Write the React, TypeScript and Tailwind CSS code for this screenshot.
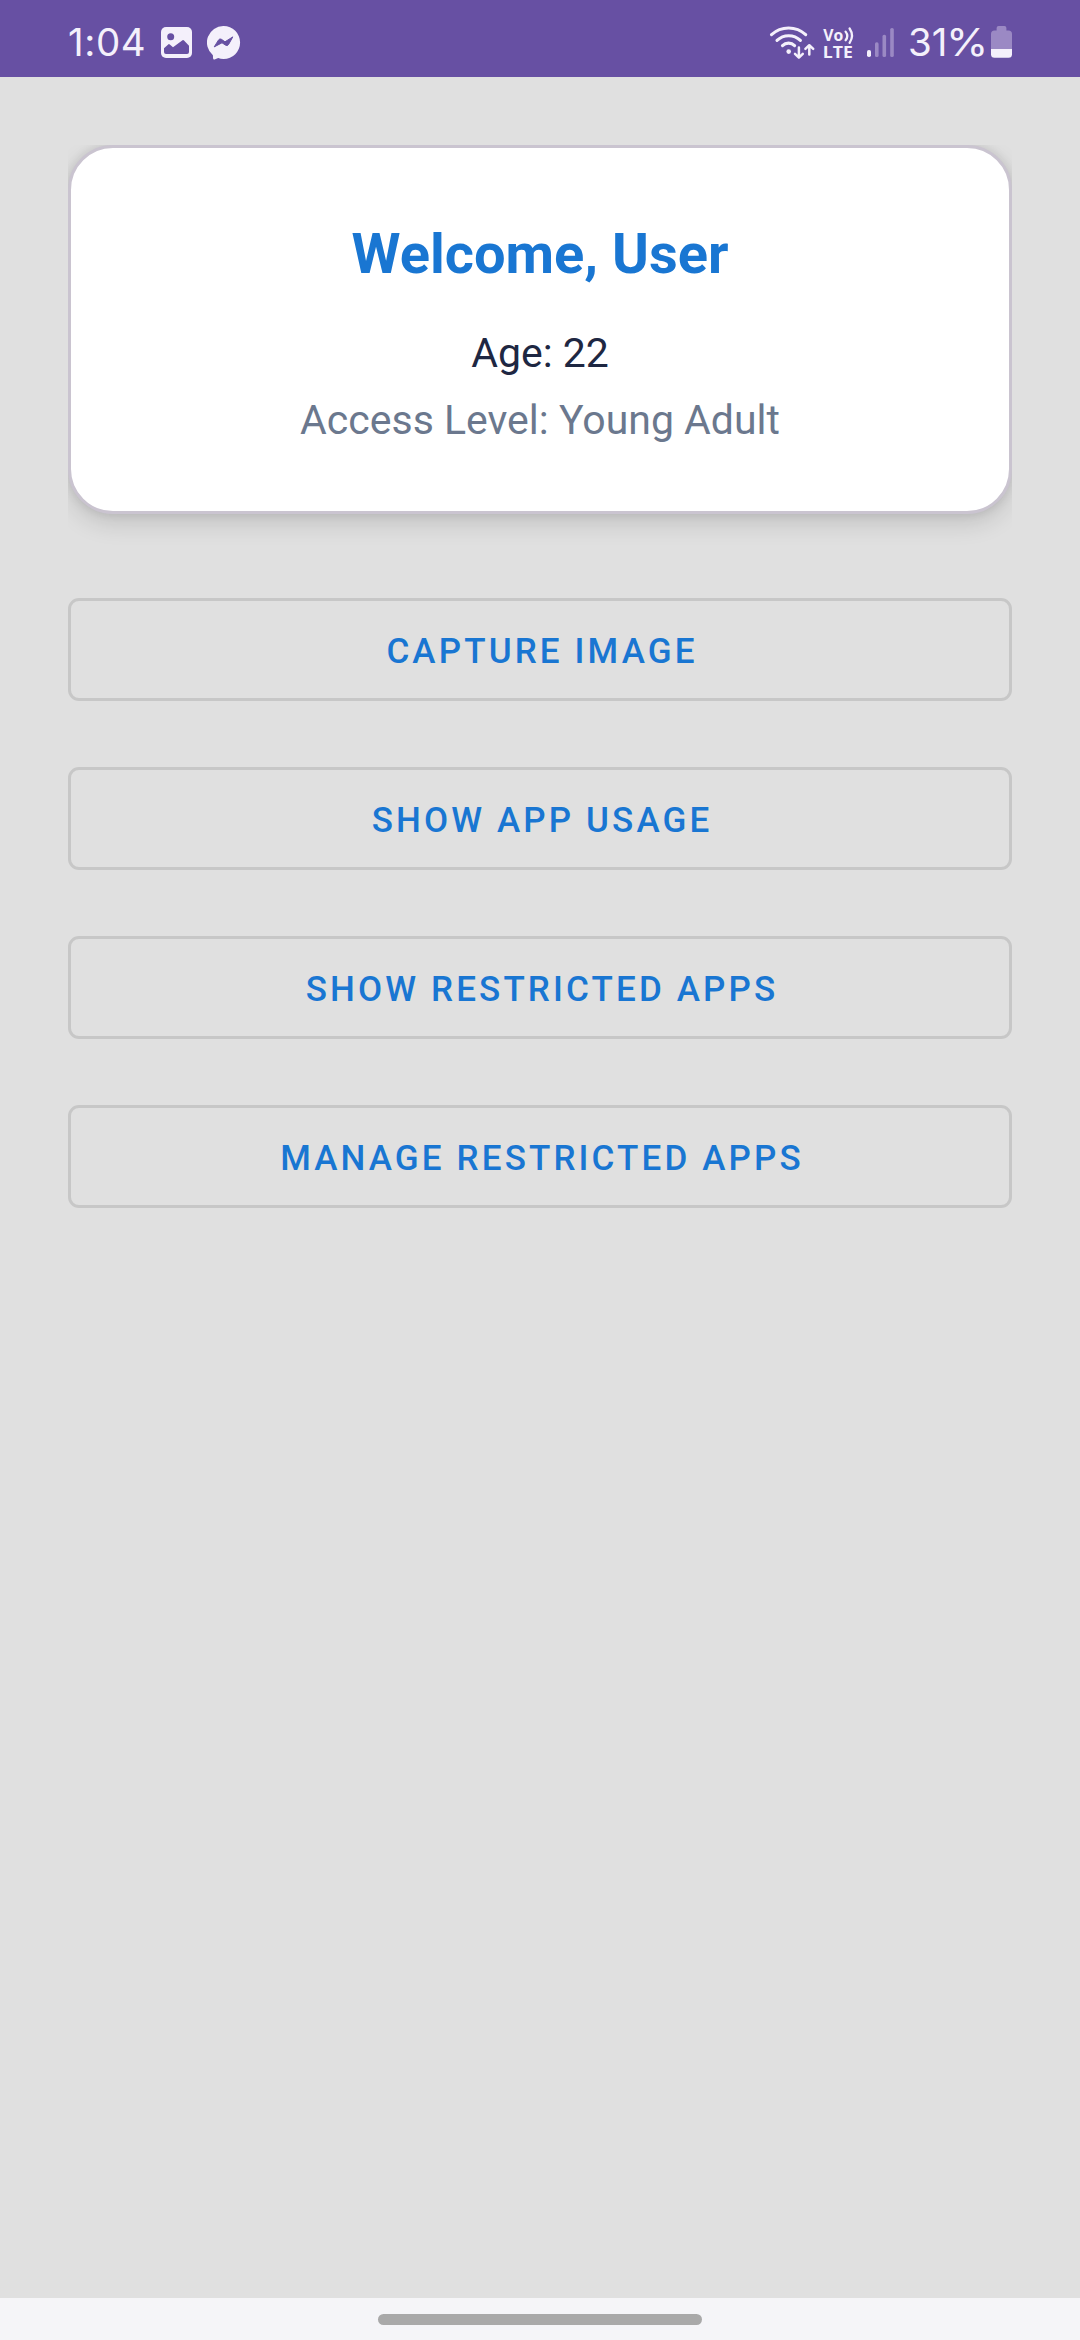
import type { ReactNode } from 'react';

function GalleryIcon() {
  return (
    <svg className="ml-4 h-[31px] w-[31px]" viewBox="0 0 31 31">
      <rect width="31" height="31" rx="5" fill="#f4f0fb" />
      <circle cx="9.7" cy="9.7" r="3.5" fill="#6750a3" />
      <path
        d="M3 21.3 7.2 17.4Q8 16.8 8.8 17.5L12 20.2 21.5 13.2Q22.3 12.6 23 13.4L28 18.7V25Q28 27 26 27H5Q3 27 3 25Z"
        fill="#6750a3"
      />
    </svg>
  );
}

function MessengerIcon() {
  return (
    <svg className="mt-0.5 ml-[15px] h-[34px] w-[34px]" viewBox="0 0 34 34">
      <path
        d="M16.6 0A16.5 16.5 0 0 1 16.6 33Q13.6 33 11.2 32L7.6 33.4Q6.2 33.8 6.1 32.4L5.9 29.2A16.5 16.5 0 0 1 16.6 0Z"
        fill="#f4f0fb"
      />
      <path
        d="M7.2 20.9 11.6 13.9Q12.8 12.3 14.4 13.3L18 15.8 25.8 10.9 21.6 18.4Q20.5 20.3 18.7 19.2L15 16.8Z"
        fill="#6750a3"
        stroke="#6750a3"
        strokeWidth="1"
        strokeLinejoin="round"
      />
    </svg>
  );
}

function WifiIcon() {
  return (
    <svg
      className="h-9 w-12"
      viewBox="0 0 48 36"
      fill="none"
      stroke="#f4f0fb"
      strokeLinecap="round"
      strokeLinejoin="round"
    >
      <g strokeWidth="3.1">
        <path d="M3.5 10.7A25.2 25.2 0 0 1 37.7 10.7" />
        <path d="M9 16.4A16.9 16.9 0 0 1 32.4 16.4" />
        <path d="M14.5 21.6A8.6 8.6 0 0 1 26.6 21.6" />
      </g>
      <circle cx="20.7" cy="27.6" r="2.3" fill="#f4f0fb" stroke="none" />
      <g strokeWidth="2.5">
        <path d="M30.9 23.6V33.4M27 29.9 30.9 33.6 34.8 29.9" />
        <path d="M41.3 30.6V21.2M37.4 24.9 41.3 21.2 45.2 24.9" />
      </g>
    </svg>
  );
}

function VolteIcon() {
  return (
    <svg className="mt-0.5 ml-1.5 h-[34px] w-8 overflow-visible" viewBox="0 0 32 34">
      <g fill="#f4f0fb" fontFamily="'Open Sans', sans-serif" fontWeight="700" fontSize="16.8">
        <text x="1.2" y="14.8" textLength="20" lengthAdjust="spacingAndGlyphs">
          Vo
        </text>
        <text x="0.8" y="32" textLength="30" lengthAdjust="spacingAndGlyphs">
          LTE
        </text>
      </g>
      <g fill="none" stroke="#f4f0fb" strokeWidth="2.3" strokeLinecap="round">
        <path d="M23.6 5.6Q27 10 23.6 14.2" />
        <path d="M27.6 2.5Q32.4 9.8 27.6 16.8" />
      </g>
    </svg>
  );
}

function SignalIcon() {
  return (
    <svg className="ml-[13px] h-[29px] w-[27px]" viewBox="0 0 27 29">
      <rect x="0" y="22" width="4" height="7" rx="1.8" fill="#f4f0fb" />
      <g fill="#9b89c4">
        <rect x="8" y="14.3" width="3.6" height="14.7" rx="1.6" />
        <rect x="15.5" y="6.8" width="3.6" height="22.2" rx="1.6" />
        <rect x="23.2" y="0" width="3.6" height="29" rx="1.6" />
      </g>
    </svg>
  );
}

function BatteryIcon() {
  return (
    <svg className="ml-1.5 h-8 w-[21px]" viewBox="0 0 21 32">
      <path
        d="M5.6 2Q5.6 0 7.6 0H13.4Q15.4 0 15.4 2V4.6H17.5Q21 4.6 21 8.1V23H0V8.1Q0 4.6 3.5 4.6H5.6Z"
        fill="#9b89c4"
      />
      <path d="M0 23H21V28.3Q21 31.8 17.5 31.8H3.5Q0 31.8 0 28.3Z" fill="#f4f0fb" />
    </svg>
  );
}

function StatusBar() {
  return (
    <header className="flex h-[77px] items-center justify-between bg-[#6750a3] px-[68px] pt-[7px] font-['Inter',sans-serif] text-[38.5px] leading-none text-[#f4f0fb]">
      <div className="flex items-center">
        <span className="w-[77px] tracking-[0.6px]">1:04</span>
        <GalleryIcon />
        <MessengerIcon />
      </div>
      <div className="flex items-center">
        <WifiIcon />
        <VolteIcon />
        <SignalIcon />
        <span className="ml-3.5 w-[77px] whitespace-nowrap">
          31<span className="-ml-px inline-block origin-left scale-x-[1.12]">%</span>
        </span>
        <BatteryIcon />
      </div>
    </header>
  );
}

function OutlinedButton({ children }: { children: ReactNode }) {
  return (
    <button
      type="button"
      className="flex h-[103px] w-full items-center justify-center rounded-[11px] border-3 border-[#c7c7c7] pt-[3px] pl-[4px] text-[35px] leading-none font-medium tracking-[3.13px] text-[#1976d2] uppercase"
    >
      {children}
    </button>
  );
}

const actions = ['Capture Image', 'Show App Usage', 'Show Restricted Apps', 'Manage Restricted Apps'];

export default function App() {
  return (
    <div className="flex h-[2340px] w-[1080px] flex-col bg-[#e0e0e0] font-['Roboto',sans-serif]">
      <StatusBar />
      <main className="flex-1 px-[68px] pt-[68px]">
        <div className="h-[453px] overflow-hidden">
          <section className="h-[369px] rounded-[45px] border-3 border-[#cac4d0] bg-white pt-[73px] text-center shadow-[0_9px_24px_rgba(0,0,0,0.14),0_0_10px_rgba(0,0,0,0.1)]">
            <h1 className="text-[56px] leading-[66px] font-bold text-[#1976d2]">Welcome, User</h1>
            <p className="mt-[42px] text-[41px] leading-[48px] text-[#1e2742]">Age: 22</p>
            <p className="mt-[19px] text-[41px] leading-[48px] text-[#6b788e]">Access Level: Young Adult</p>
          </section>
        </div>
        <div className="flex flex-col gap-[66px]">
          {actions.map((label) => (
            <OutlinedButton key={label}>{label}</OutlinedButton>
          ))}
        </div>
      </main>
      <footer className="flex h-[42px] justify-center bg-[#f5f5f8] pt-4">
        <div className="h-[11px] w-[324px] rounded-full bg-[#a9a9a9]" />
      </footer>
    </div>
  );
}
